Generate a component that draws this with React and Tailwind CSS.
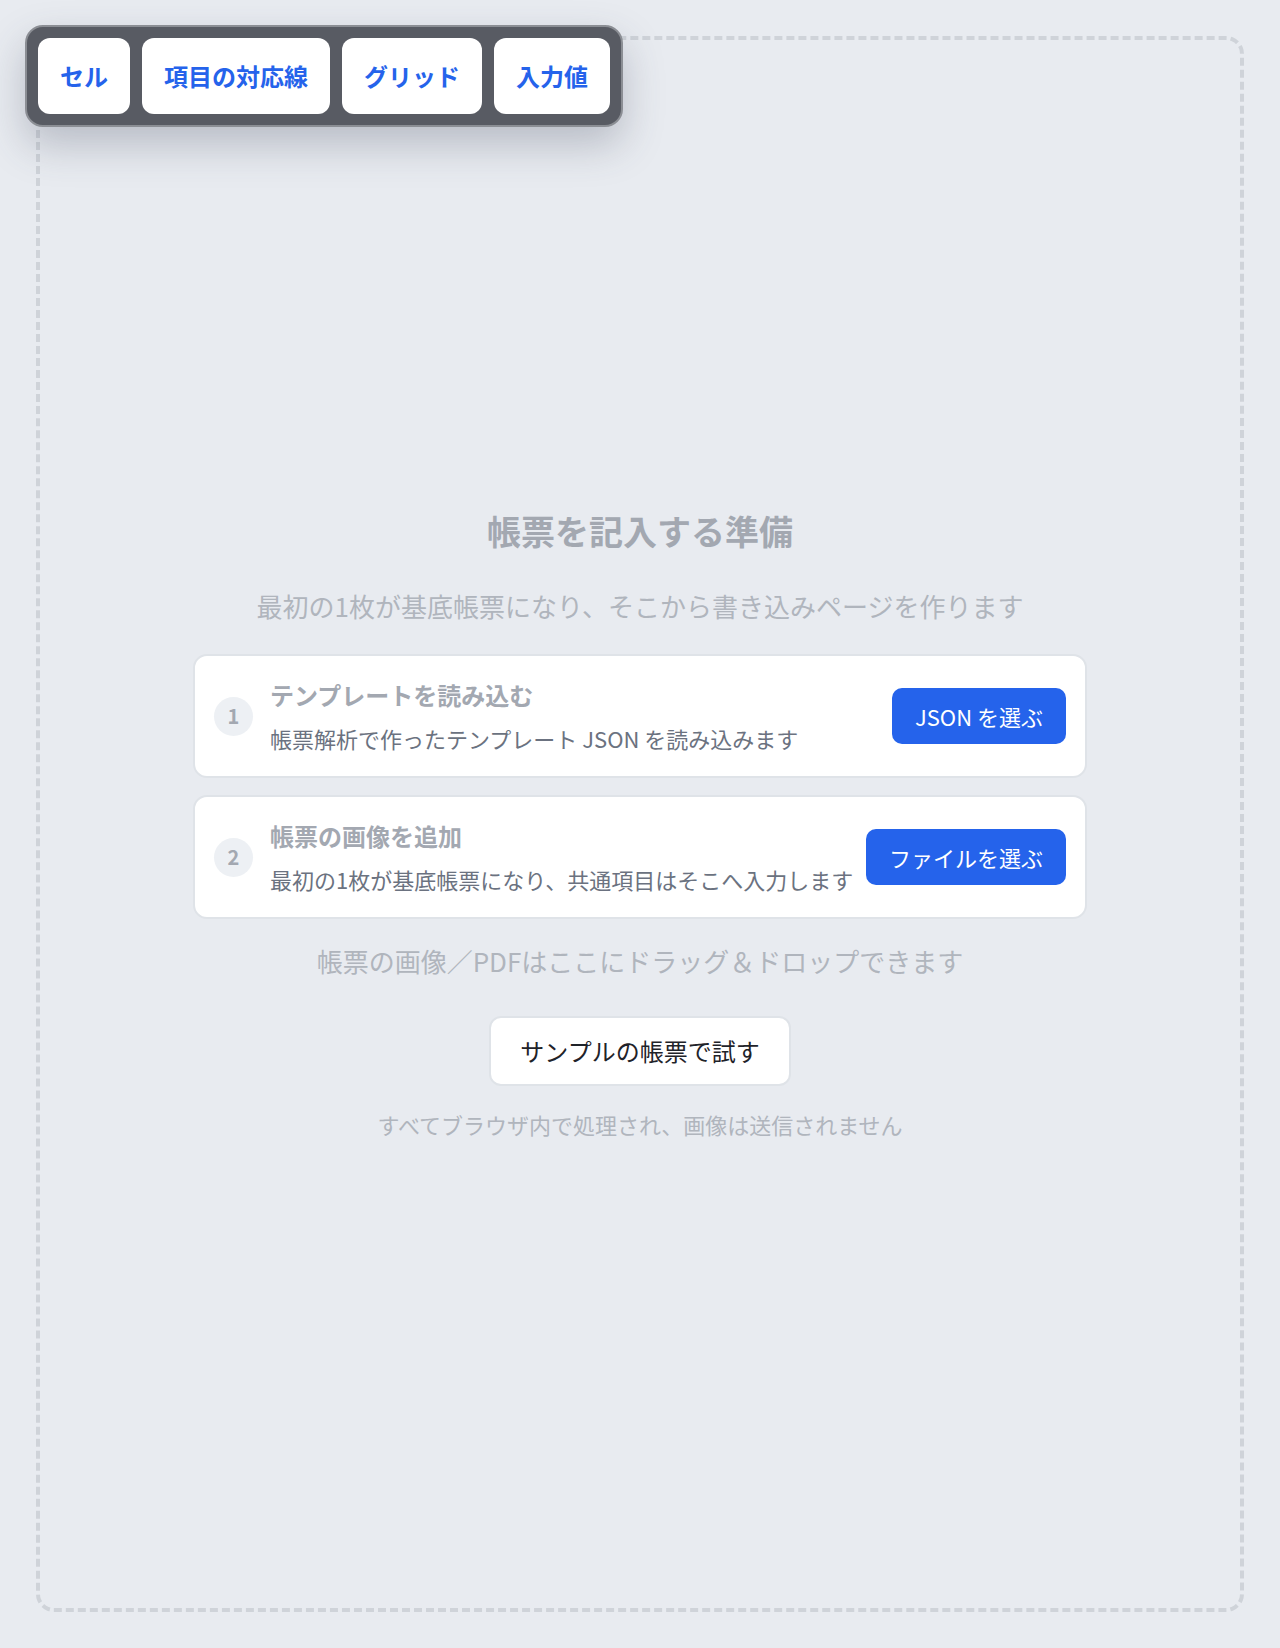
import React from 'react';

const layers = ['セル', '項目の対応線', 'グリッド', '入力値'];

const steps = [
  {
    no: 1,
    title: 'テンプレートを読み込む',
    desc: '帳票解析で作ったテンプレート JSON を読み込みます',
    action: 'JSON を選ぶ',
  },
  {
    no: 2,
    title: '帳票の画像を追加',
    desc: '最初の1枚が基底帳票になり、共通項目はそこへ入力します',
    action: 'ファイルを選ぶ',
  },
];

const StepCard = ({ no, title, desc, action }) => (
  <div className="flex items-center rounded-[14px] border-2 border-[#dfe3e8] bg-white px-[19px] py-[22px]">
    <div className="flex h-[39px] w-[39px] shrink-0 items-center justify-center rounded-full bg-[#edf0f4] text-[20px] font-bold text-[#a3a8b1]">
      {no}
    </div>
    <div className="ml-[17px] flex-1 min-w-0">
      <div className="text-[24px] leading-[34px] font-bold text-[#a3a8b1]">{title}</div>
      <div className="mt-[10px] whitespace-nowrap text-[22px] leading-[32px] text-[#6b7280]">{desc}</div>
    </div>
    <button className="ml-3 shrink-0 h-[56px] rounded-[10px] bg-[#2563eb] px-[23px] text-[22px] text-white">
      {action}
    </button>
  </div>
);

export default function App() {
  return (
    <div className="relative flex min-h-screen flex-col bg-[#e8ebf0] p-[36px] font-['Noto_Sans_CJK_JP',sans-serif]">
      {/* レイヤー切り替え */}
      <div className="absolute left-[25px] top-[25px] z-10 flex gap-[12px] rounded-[18px] border-2 border-[#8b8e94] bg-[#585b63] p-[11px] shadow-[0_18px_40px_rgba(60,70,90,0.28)]">
        {layers.map((label) => (
          <button
            key={label}
            className="flex h-[76px] items-center rounded-[12px] bg-white px-[22px] text-[24px] font-bold text-[#2563eb]"
          >
            {label}
          </button>
        ))}
      </div>

      <div className="flex flex-1 flex-col items-center justify-center rounded-[18px] border-4 border-dashed border-[#cfd3d9]">
        <h1 className="text-[34px] leading-[44px] font-bold text-[#a3a8b1]">帳票を記入する準備</h1>
        <p className="mt-[35px] text-[26px] leading-[36px] text-[#b0b5bd]">
          最初の1枚が基底帳票になり、そこから書き込みページを作ります
        </p>

        <div className="mt-[30px] flex w-[894px] flex-col gap-[17px]">
          {steps.map((s) => (
            <StepCard key={s.no} {...s} />
          ))}
        </div>

        <p className="mt-[24px] text-[26px] leading-[36px] text-[#b0b5bd]">
          帳票の画像／PDFはここにドラッグ＆ドロップできます
        </p>

        <button className="mt-[37px] h-[70px] rounded-[12px] border-2 border-[#dfe3e8] bg-white px-[29px] text-[24px] text-[#1f2329]">
          サンプルの帳票で試す
        </button>

        <p className="mt-[23px] text-[22px] leading-[30px] text-[#b0b5bd]">
          すべてブラウザ内で処理され、画像は送信されません
        </p>
      </div>
    </div>
  );
}
